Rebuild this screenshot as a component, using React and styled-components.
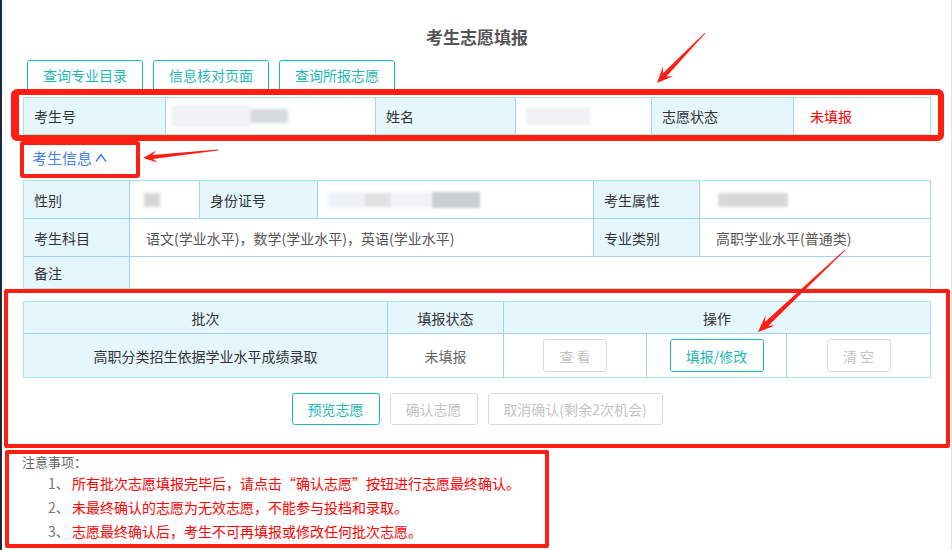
import React from "react";
import styled, { createGlobalStyle } from "styled-components";

const TEAL = "#1db8b8";
const RED = "#fe1f12";
const LINE = "#9fd3f1";
const EDGE = "#a3eadb";
const LABEL_BG = "#e5f6fd";

const GlobalStyle = createGlobalStyle`
  html, body {
    margin: 0;
    padding: 0;
    background: #fff;
  }
  body {
    font-family: "Noto Sans CJK SC", "Noto Sans", sans-serif;
  }
  * {
    box-sizing: border-box;
  }
`;

const Page = styled.div`
  position: relative;
  width: 952px;
  height: 550px;
  padding: 0 21px 0 23px;
  background: #fff;
  box-shadow: inset 2px 0 0 #1c2836, inset -1px 0 0 #e4e4e4;
  overflow: hidden;
  color: #333;
  font-size: 14px;
`;

const Title = styled.h1`
  margin: 0;
  height: 60px;
  padding-top: 27px;
  font-size: 17px;
  line-height: 20px;
  font-weight: 700;
  color: #555;
  text-align: center;
`;

const Tabs = styled.div`
  display: flex;
  gap: 10px;
  margin: 0 0 7px 4px;
`;

const Tab = styled.button`
  width: 116px;
  height: 30px;
  padding: 0;
  border: 1px solid ${TEAL};
  border-radius: 3px 3px 0 0;
  background: #fff;
  color: ${TEAL};
  font-family: inherit;
  font-size: 14px;
  line-height: 28px;
`;

const Grid = styled.div`
  display: grid;
  grid-template-columns: ${({ $cols }) => $cols};
  grid-template-rows: ${({ $rows }) => $rows};
  gap: 1px;
  background: ${LINE};
  border: 1px solid ${EDGE};
`;

const Cell = styled.div`
  display: flex;
  align-items: center;
  justify-content: ${({ $center }) => ($center ? "center" : "flex-start")};
  padding: 0 ${({ $center, $label }) => ($center ? 0 : $label ? 10 : 16)}px;
  grid-column: ${({ $span }) => ($span ? `span ${$span}` : "auto")};
  background: ${({ $label }) => ($label ? LABEL_BG : "#fff")};
  color: ${({ $tone }) => $tone || "#333"};
  font-size: 14px;
  white-space: nowrap;
`;

const Smudge = styled.span`
  display: inline-block;
  width: ${({ $w }) => $w}px;
  height: ${({ $h }) => $h}px;
  margin-left: ${({ $ml }) => $ml || 0}px;
  background: ${({ $c }) => $c};
  filter: blur(1.6px);
`;

const Toggle = styled.div`
  height: 45px;
  padding-left: 9px;
  display: flex;
  align-items: center;
  gap: 2px;
  color: #4a7ff0;
  font-size: 15px;
`;

const Btn = styled.button`
  width: ${({ $w }) => $w}px;
  height: ${({ $h }) => $h || 32}px;
  padding: 0;
  border: 1px solid ${({ disabled }) => (disabled ? "#dadada" : TEAL)};
  border-radius: 3px;
  background: #fff;
  color: ${({ disabled }) => (disabled ? "#c4c4c4" : TEAL)};
  font-family: inherit;
  font-size: 14px;
  letter-spacing: ${({ $spaced }) => ($spaced ? "3px" : "0")};
  text-indent: ${({ $spaced }) => ($spaced ? "3px" : "0")};
`;

const BatchWrap = styled.div`
  margin-top: 12px;
`;

const Actions = styled.div`
  display: flex;
  justify-content: center;
  gap: 10px;
  margin-top: 15px;
`;

const Notes = styled.div`
  margin-top: 28px;
`;

const NotesHead = styled.div`
  margin-left: -1px;
  line-height: 18px;
  font-size: 13px;
  color: #666;
`;

const NoteItem = styled.div`
  display: flex;
  padding-left: 25px;
  line-height: 24px;
  font-size: 14px;
  color: #f00;
`;

const NoteNum = styled.span`
  width: 24px;
  color: #777;
`;

const Mark = styled.div`
  position: absolute;
  left: ${({ $x }) => $x}px;
  top: ${({ $y }) => $y}px;
  width: ${({ $w }) => $w}px;
  height: ${({ $h }) => $h}px;
  border: ${({ $b }) => $b}px solid ${RED};
  border-left-width: ${({ $bl, $b }) => $bl || $b}px;
  border-radius: ${({ $r }) => $r}px;
  pointer-events: none;
`;

const Overlay = styled.svg`
  position: absolute;
  left: 0;
  top: 0;
  pointer-events: none;
`;

function arrowPoints(x1, y1, x2, y2, head, half, shaft) {
  const dx = x2 - x1;
  const dy = y2 - y1;
  const len = Math.hypot(dx, dy);
  const ux = dx / len;
  const uy = dy / len;
  const nx = -uy;
  const ny = ux;
  const bx = x2 - ux * head;
  const by = y2 - uy * head;
  const sx = x2 - ux * head * 0.7;
  const sy = y2 - uy * head * 0.7;
  const tail = 0.4;
  return [
    [x1 + nx * tail, y1 + ny * tail],
    [sx + nx * shaft, sy + ny * shaft],
    [bx + nx * half, by + ny * half],
    [x2, y2],
    [bx - nx * half, by - ny * half],
    [sx - nx * shaft, sy - ny * shaft],
    [x1 - nx * tail, y1 - ny * tail],
  ]
    .map((p) => p.map((v) => v.toFixed(1)).join(","))
    .join(" ");
}

const arrows = [
  [705, 33, 657, 83, 16, 7, 2.4],
  [218, 150, 143, 158, 14, 6, 2],
  [845, 250, 758, 332, 17, 7, 2.6],
];

const ChevronUp = () => (
  <svg width="14" height="14" viewBox="0 0 14 14" fill="none">
    <path d="M2 10.5 L7 3.5 L12 10.5" stroke="currentColor" strokeWidth="1.4" />
  </svg>
);

export default function App() {
  return (
    <>
      <GlobalStyle />
      <Page>
        <Title>考生志愿填报</Title>

        <Tabs>
          <Tab>查询专业目录</Tab>
          <Tab>信息核对页面</Tab>
          <Tab>查询所报志愿</Tab>
        </Tabs>

        <Grid $cols="141px 209px 139px 135px 141px 136px" $rows="36px">
          <Cell $label>考生号</Cell>
          <Cell>
            <Smudge $w={78} $h={22} $c="#eef2f5" $ml={-10} />
            <Smudge $w={38} $h={14} $c="#d7dbde" />
          </Cell>
          <Cell $label>姓名</Cell>
          <Cell>
            <Smudge $w={64} $h={18} $c="#eff1f3" $ml={-6} />
          </Cell>
          <Cell $label>志愿状态</Cell>
          <Cell $tone="#f00">未填报</Cell>
        </Grid>

        <Toggle>
          考生信息
          <ChevronUp />
        </Toggle>

        <Grid $cols="105px 69px 117px 275px 105px 230px" $rows="37px 37px 31px">
          <Cell $label>性别</Cell>
          <Cell>
            <Smudge $w={16} $h={14} $c="#d6d6d6" $ml={-2} />
          </Cell>
          <Cell $label>身份证号</Cell>
          <Cell>
            <Smudge $w={36} $h={16} $c="#eef3f6" $ml={-6} />
            <Smudge $w={28} $h={14} $c="#e0e2e2" />
            <Smudge $w={40} $h={16} $c="#f0f4f6" />
            <Smudge $w={48} $h={16} $c="#c9cfd2" />
          </Cell>
          <Cell $label>考生属性</Cell>
          <Cell>
            <Smudge $w={70} $h={14} $c="#d8d8d8" $ml={2} />
          </Cell>

          <Cell $label>考生科目</Cell>
          <Cell $span={3} $tone="#555">
            语文(学业水平)，数学(学业水平)，英语(学业水平)
          </Cell>
          <Cell $label>专业类别</Cell>
          <Cell $tone="#555">高职学业水平(普通类)</Cell>

          <Cell $label>备注</Cell>
          <Cell $span={5} />
        </Grid>

        <BatchWrap>
          <Grid $cols="363px 115px 142px 139px 143px" $rows="31px 43px">
            <Cell $label $center>批次</Cell>
            <Cell $label $center>填报状态</Cell>
            <Cell $label $center $span={3}>操作</Cell>

            <Cell $label $center>高职分类招生依据学业水平成绩录取</Cell>
            <Cell $center $tone="#666">未填报</Cell>
            <Cell $center>
              <Btn $w={64} $h={33} $spaced disabled>查看</Btn>
            </Cell>
            <Cell $center>
              <Btn $w={94} $h={33}>填报/修改</Btn>
            </Cell>
            <Cell $center>
              <Btn $w={64} $h={33} $spaced disabled>清空</Btn>
            </Cell>
          </Grid>
        </BatchWrap>

        <Actions>
          <Btn $w={88}>预览志愿</Btn>
          <Btn $w={88} disabled>确认志愿</Btn>
          <Btn $w={175} disabled>取消确认(剩余2次机会)</Btn>
        </Actions>

        <Notes>
          <NotesHead>注意事项：</NotesHead>
          <NoteItem>
            <NoteNum>1、</NoteNum>
            所有批次志愿填报完毕后，请点击“确认志愿”按钮进行志愿最终确认。
          </NoteItem>
          <NoteItem>
            <NoteNum>2、</NoteNum>
            未最终确认的志愿为无效志愿，不能参与投档和录取。
          </NoteItem>
          <NoteItem>
            <NoteNum>3、</NoteNum>
            志愿最终确认后，考生不可再填报或修改任何批次志愿。
          </NoteItem>
        </Notes>

        <Mark $x={11} $y={89} $w={933} $h={52} $b={6} $bl={8} $r={6} />
        <Mark $x={20} $y={141} $w={120} $h={37} $b={4} $r={3} />
        <Mark $x={4} $y={289} $w={946} $h={159} $b={4} $r={2} />
        <Mark $x={5} $y={450} $w={544} $h={98} $b={4} $r={2} />

        <Overlay width="952" height="550" viewBox="0 0 952 550">
          {arrows.map(([x1, y1, x2, y2, h, w, s], i) => (
            <polygon key={i} points={arrowPoints(x1, y1, x2, y2, h, w, s)} fill={RED} />
          ))}
        </Overlay>
      </Page>
    </>
  );
}
